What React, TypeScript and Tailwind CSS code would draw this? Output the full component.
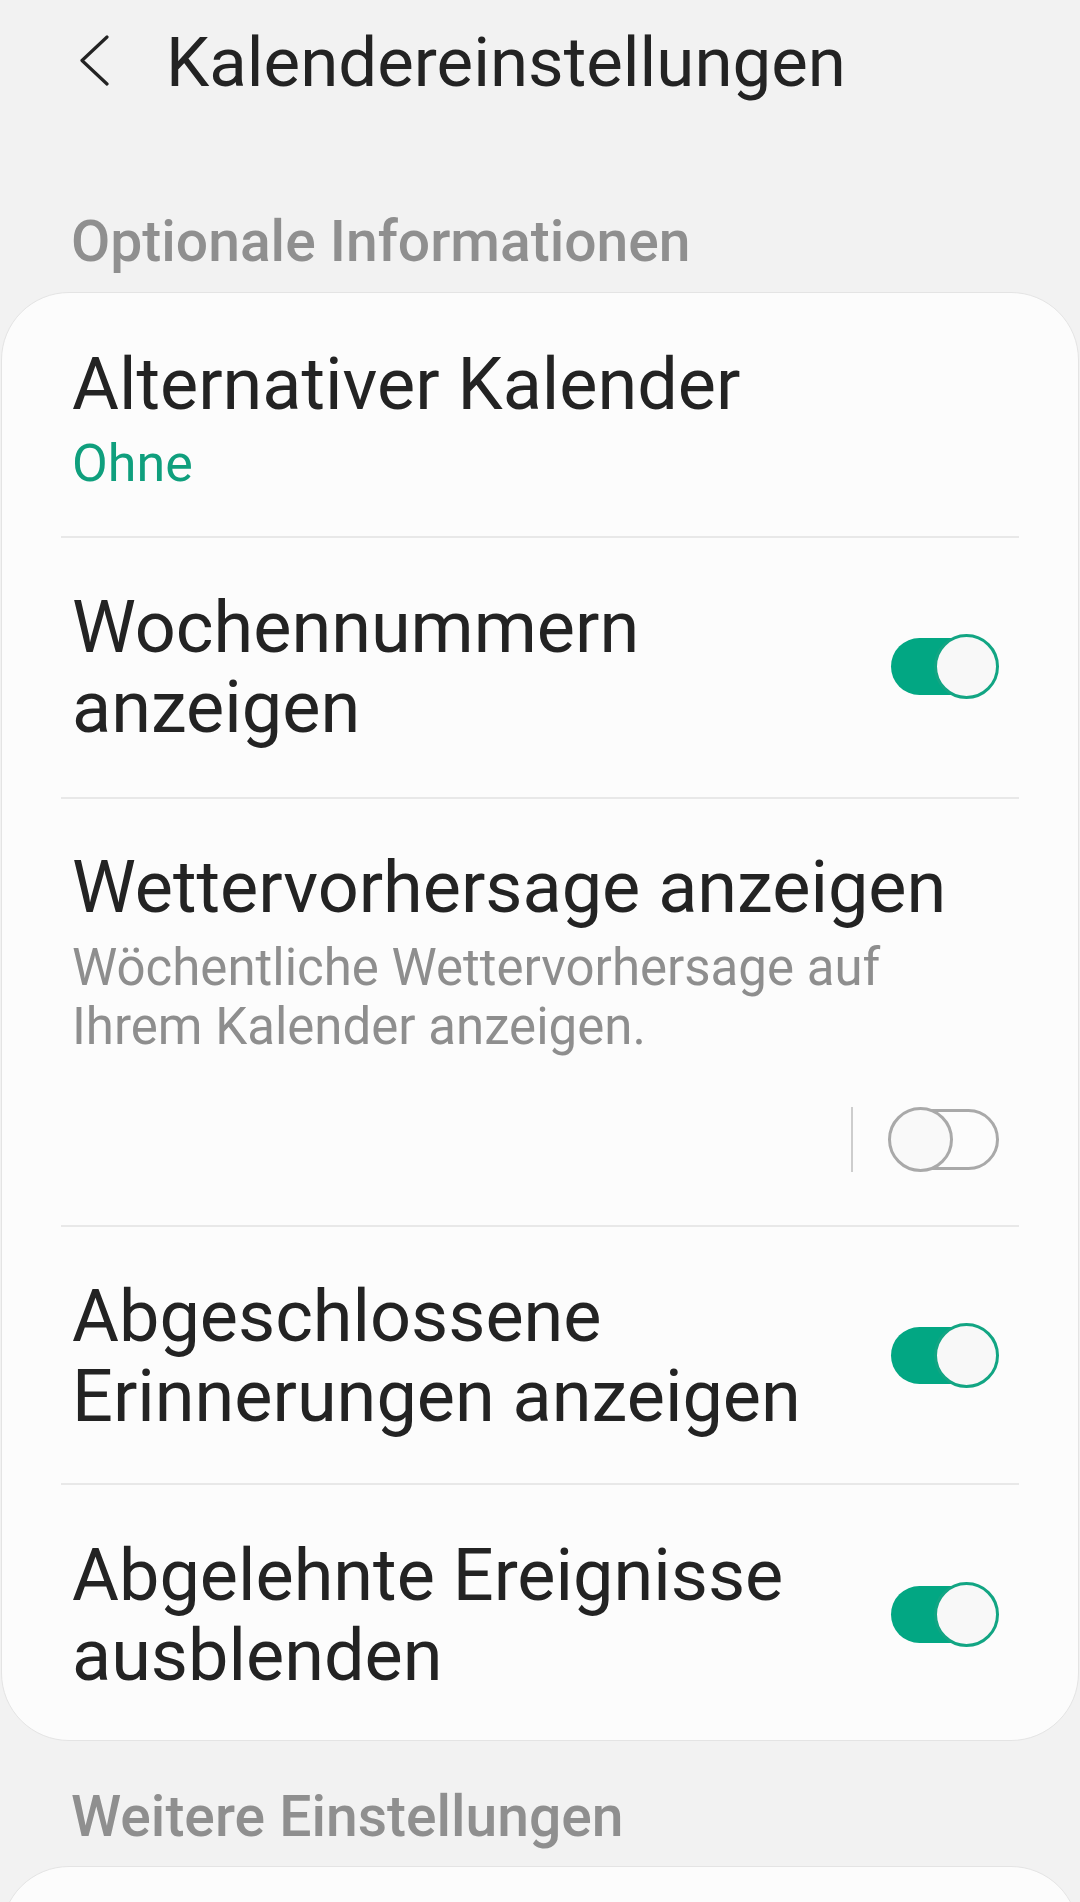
import React from "react";

function ToggleOn() {
  return (
    <div className="relative w-[108px] h-[65px] shrink-0 ml-[30px] -mt-[4px]">
      <div className="absolute left-0 top-[4px] w-[96px] h-[57px] rounded-full bg-[#02a783]" />
      <div className="absolute right-0 top-0 w-[65px] h-[65px] rounded-full border-[3px] border-[#12a583] bg-[#f8f8f8]" />
    </div>
  );
}

function ToggleOff() {
  return (
    <div className="flex items-center">
      <div className="w-[2px] h-[65px] bg-[#cdcdcd]" />
      <div className="relative ml-[35px] w-[111px] h-[65px]">
        <div className="absolute right-0 top-[2px] w-[100px] h-[61px] rounded-full border-[3px] border-[#a9a9a9]" />
        <div className="absolute left-0 top-0 w-[65px] h-[65px] rounded-full border-[3px] border-[#a9a9a9] bg-[#f9f9f9]" />
      </div>
    </div>
  );
}

function Divider() {
  return <div className="h-[2px] bg-[#e8e8e8]" />;
}

export default function App() {
  return (
    <div className="w-[1080px] h-[1902px] overflow-hidden bg-[#f2f2f2] font-[Roboto,sans-serif] text-[#232323]">
      {/* Header */}
      <div className="flex pt-[23px] h-[103px]">
        <svg
          className="ml-[79px] mt-[12px] w-[32px] h-[52px] shrink-0"
          viewBox="0 0 32 52"
          fill="none"
          stroke="#232323"
          strokeWidth="3.2"
          strokeLinecap="round"
          strokeLinejoin="round"
        >
          <path d="M28 2 L3 25.5 L28 49" />
        </svg>
        <div className="ml-[55px] text-[69px] leading-[80px] whitespace-nowrap">
          Kalendereinstellungen
        </div>
      </div>

      {/* Section header */}
      <div className="mt-[105px] pl-[71px] text-[57px] leading-[68px] font-medium text-[#8f8f8f]">
        Optionale Informationen
      </div>

      {/* Card */}
      <div className="mt-[16px] mx-[1px] rounded-[68px] bg-[#fcfcfc] border border-[#e4e4e4] px-[59px]">
        {/* Row 1 */}
        <div className="pt-[52px] pb-[42px] pl-[11px]">
          <div className="text-[72px] leading-[80px]">Alternativer Kalender</div>
          <div className="mt-[9px] text-[52px] leading-[60px] text-[#0f9f7d]">Ohne</div>
        </div>
        <Divider />
        {/* Row 2 */}
        <div className="pt-[50px] pb-[49px] pl-[11px] pr-[20px] flex items-center">
          <div className="flex-1 text-[72px] leading-[80px]">Wochennummern anzeigen</div>
          <ToggleOn />
        </div>
        <Divider />
        {/* Row 3 */}
        <div className="pt-[49px] pb-[53px] pl-[11px] pr-[20px]">
          <div className="text-[72px] leading-[80px] whitespace-nowrap">Wettervorhersage anzeigen</div>
          <div className="mt-[10px] text-[51px] leading-[59px] text-[#8e8e8e] pr-[60px]">
            Wöchentliche Wettervorhersage auf Ihrem Kalender anzeigen.
          </div>
          <div className="mt-[51px] flex justify-end">
            <ToggleOff />
          </div>
        </div>
        <Divider />
        {/* Row 4 */}
        <div className="pt-[50px] pb-[46px] pl-[11px] pr-[20px] flex items-center">
          <div className="flex-1 text-[72px] leading-[80px]">Abgeschlossene Erinnerungen anzeigen</div>
          <ToggleOn />
        </div>
        <Divider />
        {/* Row 5 */}
        <div className="pt-[51px] pb-[44px] pl-[11px] pr-[20px] flex items-center">
          <div className="flex-1 text-[72px] leading-[80px]">Abgelehnte Ereignisse ausblenden</div>
          <ToggleOn />
        </div>
      </div>

      {/* Section header 2 */}
      <div className="mt-[42px] pl-[71px] text-[57px] leading-[68px] font-medium text-[#8f8f8f]">
        Weitere Einstellungen
      </div>

      <div className="mt-[15px] mx-[1px] h-[200px] rounded-[68px] bg-[#fcfcfc] border border-[#e4e4e4]" />
    </div>
  );
}
